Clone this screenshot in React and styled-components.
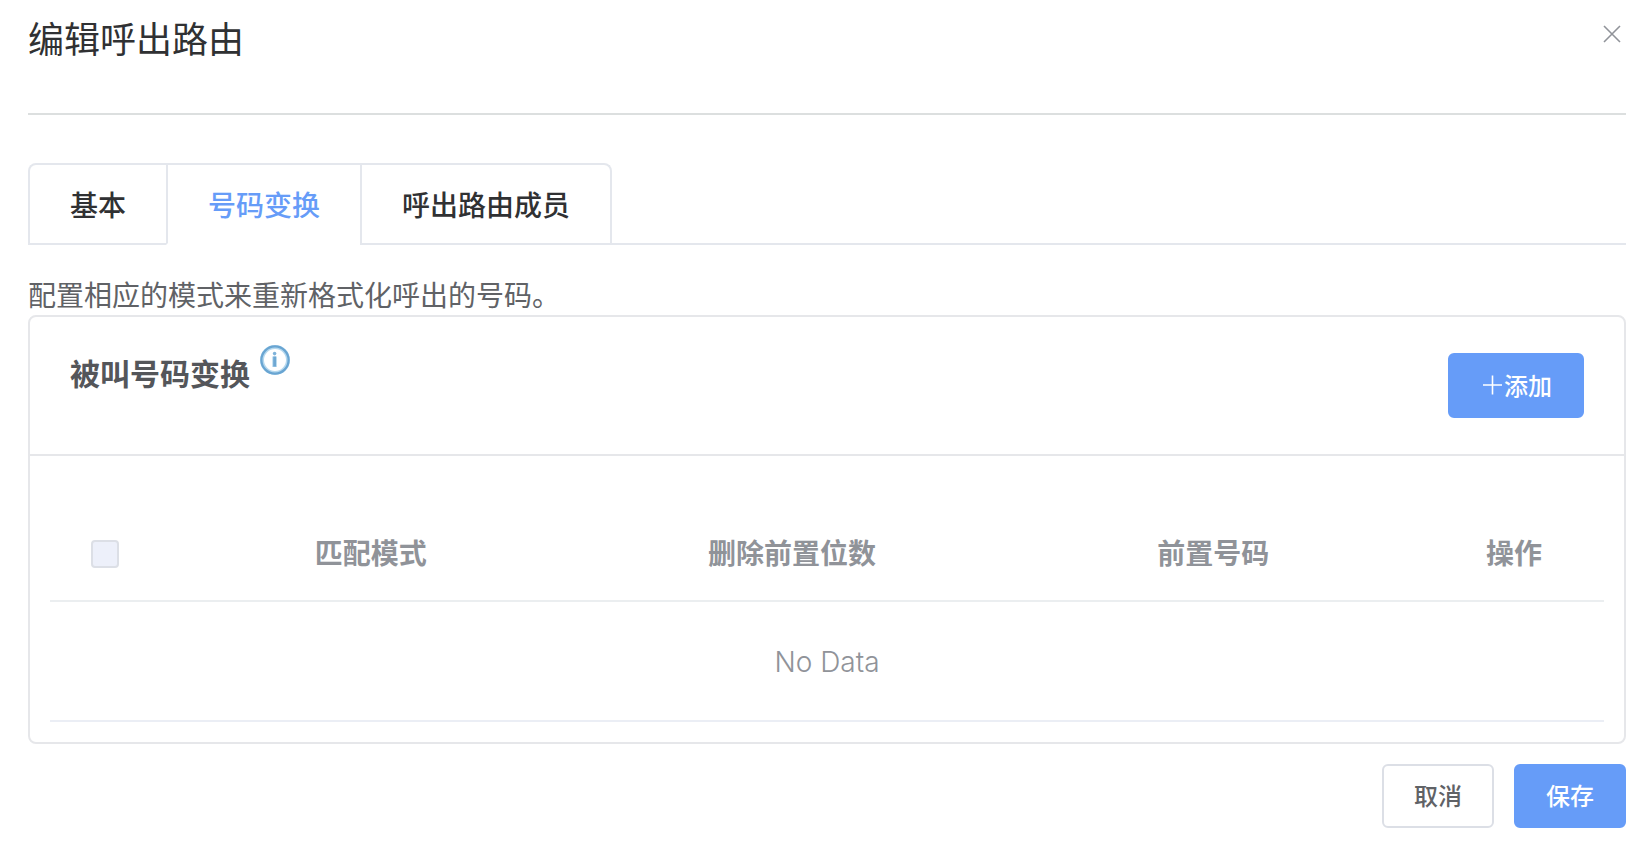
import { useState } from 'react';
import styled, { createGlobalStyle } from 'styled-components';

const tabs = ['基本', '号码变换', '呼出路由成员'];
const columns = ['匹配模式', '删除前置位数', '前置号码'];

export default function App() {
    const [activeTab, setActiveTab] = useState('号码变换');

    return (
        <>
            <GlobalStyle />
            <Dialog>
                <DialogHeader>
                    <h1>编辑呼出路由</h1>
                    <CloseButton type="button" aria-label="关闭">
                        <svg width="18" height="18" viewBox="0 0 18 18">
                            <path d="M1 1L17 17M17 1L1 17" stroke="currentColor" strokeWidth="1.6" fill="none" />
                        </svg>
                    </CloseButton>
                </DialogHeader>
                <TabBar>
                    <TabList role="tablist">
                        {tabs.map(tab => (
                            <Tab
                                key={tab}
                                type="button"
                                role="tab"
                                aria-selected={tab === activeTab}
                                $active={tab === activeTab}
                                onClick={() => setActiveTab(tab)}
                            >
                                {tab}
                            </Tab>
                        ))}
                    </TabList>
                </TabBar>
                <Description>配置相应的模式来重新格式化呼出的号码。</Description>
                <Card>
                    <CardHeader>
                        <CardTitle>
                            <h2>被叫号码变换</h2>
                            <InfoIcon />
                        </CardTitle>
                        <AddButton type="button">
                            <PlusIcon />
                            添加
                        </AddButton>
                    </CardHeader>
                    <CardBody>
                        <Table>
                            <thead>
                                <tr>
                                    <HeadCell $width="110px">
                                        <Checkbox type="checkbox" aria-label="全选" disabled />
                                    </HeadCell>
                                    {columns.map(column => <HeadCell key={column}>{column}</HeadCell>)}
                                    <HeadCell $width="180px">操作</HeadCell>
                                </tr>
                            </thead>
                            <tbody>
                                <tr>
                                    <EmptyCell colSpan={5}>No Data</EmptyCell>
                                </tr>
                            </tbody>
                        </Table>
                    </CardBody>
                </Card>
                <DialogFooter>
                    <Button type="button">取消</Button>
                    <Button type="button" $primary>保存</Button>
                </DialogFooter>
            </Dialog>
        </>
    )
}

function InfoIcon() {
    return (
        <svg width="30" height="30" viewBox="0 0 30 30" fill="none" role="img" aria-label="提示">
            <circle cx="15" cy="15" r="13" stroke="#B5D8EE" strokeWidth="4" />
            <circle cx="15" cy="15" r="13.6" stroke="#69A5D2" strokeWidth="2.2" />
            <path d="M14.6 11.5V22" stroke="#B5D8EE" strokeWidth="4.6" />
            <path d="M14.6 11.5V21.6" stroke="#6FA8D3" strokeWidth="2.8" />
            <circle cx="14.6" cy="8.6" r="1.8" fill="#7FB3DA" />
        </svg>
    )
}

function PlusIcon() {
    return (
        <svg width="24" height="24" viewBox="0 0 24 24" aria-hidden="true">
            <path d="M3 12H22M12.5 2.5V21.5" stroke="currentColor" strokeWidth="1.6" />
        </svg>
    )
}

const GlobalStyle = createGlobalStyle`
    * {
        box-sizing: border-box;
    }

    body {
        margin: 0;
        background-color: #FFFFFF;
        font-family: 'Noto Sans CJK SC', sans-serif;
    }

    h1, h2, p {
        margin: 0;
    }

    button {
        font-family: inherit;
        cursor: pointer;
    }
`;

const Dialog = styled.div`
    padding: 12px 24px 28px 28px;
`;

const DialogHeader = styled.header`
    padding-bottom: 51px;
    margin-bottom: 48px;
    border-bottom: 2px solid #DCDFDF;
    display: flex;
    justify-content: space-between;
    align-items: flex-start;

    h1 {
        font-size: 36px;
        font-weight: 400;
        line-height: 50px;
        color: #303133;
    }
`;

const CloseButton = styled.button`
    padding: 13px 5px;
    border: none;
    background: transparent;
    color: #909399;

    svg {
        display: block;
    }
`;

const TabBar = styled.div`
    display: flex;
    border-bottom: 2px solid #E4E7ED;
`;

const TabList = styled.div`
    display: flex;
    margin-bottom: -2px;
    border: 2px solid #E4E7ED;
    border-bottom: none;
    border-radius: 8px 8px 0 0;
`;

const Tab = styled.button`
    height: 80px;
    padding: 0 40px;
    background: transparent;
    border: none;
    border-bottom: 2px solid ${props => props.$active ? '#FFFFFF' : 'transparent'};
    font-size: 28px;
    font-weight: 500;
    line-height: 40px;
    color: ${props => props.$active ? '#669CF8' : '#303133'};

    & + & {
        border-left: 2px solid #E4E7ED;
    }
`;

const Description = styled.p`
    margin-top: 28px;
    font-size: 28px;
    line-height: 42px;
    color: #606266;
`;

const Card = styled.section`
    border: 2px solid #E6E7EA;
    border-radius: 8px;
`;

const CardHeader = styled.div`
    padding: 36px 40px;
    border-bottom: 2px solid #E6E7EA;
    display: flex;
    justify-content: space-between;
    align-items: flex-start;
`;

const CardTitle = styled.div`
    margin-top: -8px;
    display: flex;
    gap: 10px;

    h2 {
        padding-top: 8px;
        font-size: 30px;
        font-weight: 700;
        line-height: 38px;
        color: #54565A;
    }
`;

const Button = styled.button`
    height: 64px;
    padding: 0 30px 2px;
    border: 2px solid ${props => props.$primary ? '#669CF8' : '#DCDFE6'};
    border-radius: 6px;
    background-color: ${props => props.$primary ? '#669CF8' : '#FFFFFF'};
    font-size: 24px;
    font-weight: 500;
    line-height: 32px;
    color: ${props => props.$primary ? '#FFFFFF' : '#606266'};
`;

const AddButton = styled(Button).attrs({ $primary: true })`
    height: 65px;
    display: flex;
    align-items: center;
`;

const CardBody = styled.div`
    padding: 48px 20px 20px;
`;

const Table = styled.table`
    width: 100%;
    table-layout: fixed;
    border-collapse: separate;
    border-spacing: 0;
    color: #909399;
`;

const HeadCell = styled.th`
    width: ${props => props.$width || 'auto'};
    height: 98px;
    padding: 0;
    border-bottom: 2px solid #EBEEF0;
    font-size: 28px;
    font-weight: 700;
    line-height: 46px;
`;

const EmptyCell = styled.td`
    height: 120px;
    padding: 2px 0 0;
    border-bottom: 2px solid #EBEEF5;
    font-family: Inter, sans-serif;
    font-size: 28px;
    font-weight: 300;
    text-align: center;
`;

const Checkbox = styled.input`
    appearance: none;
    display: block;
    width: 28px;
    height: 28px;
    margin: 4px auto 0;
    border: 2px solid #DCDFE6;
    border-radius: 4px;
    background-color: #EDF0FA;
`;

const DialogFooter = styled.footer`
    margin-top: 20px;
    display: flex;
    justify-content: flex-end;
    gap: 20px;
`;
